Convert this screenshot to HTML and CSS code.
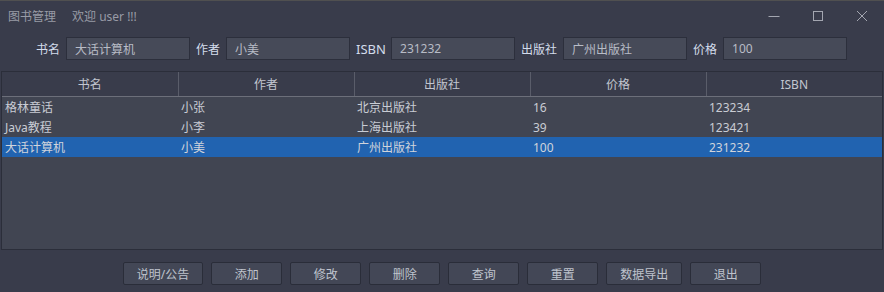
FILE: index.html
```html
<!DOCTYPE html>
<html lang="zh-CN">
<head>
<meta charset="UTF-8">
<title>图书管理</title>
<link rel="stylesheet" href="styles.css">
</head>
<body>

<div class="window">
  <!-- 标题栏 -->
  <div class="titlebar">
    <span class="app-title">图书管理</span>
    <span class="welcome">欢迎 user !!!</span>
    <div class="controls">
      <svg class="ctl ctl-min" width="12" height="12" viewBox="0 0 12 12"><path d="M0.5 6.5H11.5" stroke="#a3a6b0" stroke-width="1"/></svg>
      <svg class="ctl ctl-max" width="12" height="12" viewBox="0 0 12 12"><rect x="1.5" y="1.5" width="9" height="9" fill="none" stroke="#a3a6b0" stroke-width="1"/></svg>
      <svg class="ctl ctl-close" width="12" height="12" viewBox="0 0 12 12"><path d="M1 1L11 11M11 1L1 11" stroke="#a3a6b0" stroke-width="1"/></svg>
    </div>
  </div>

  <!-- 当前选中的图书信息 -->
  <div class="form">
    <label>书名</label><input type="text" value="大话计算机">
    <label>作者</label><input type="text" value="小美">
    <label class="isbn">ISBN</label><input type="text" value="231232">
    <label>出版社</label><input type="text" value="广州出版社">
    <label>价格</label><input type="text" value="100">
  </div>

  <!-- 图书列表 -->
  <div class="table-box">
    <table id="tabelaLivros">
      <thead>
        <tr>
          <th>书名</th>
          <th>作者</th>
          <th>出版社</th>
          <th>价格</th>
          <th>ISBN</th>
        </tr>
      </thead>
      <tbody>
        <tr>
          <td>格林童话</td>
          <td>小张</td>
          <td>北京出版社</td>
          <td>16</td>
          <td>123234</td>
        </tr>
        <tr>
          <td>Java教程</td>
          <td>小李</td>
          <td>上海出版社</td>
          <td>39</td>
          <td>123421</td>
        </tr>
        <tr class="selected">
          <td>大话计算机</td>
          <td>小美</td>
          <td>广州出版社</td>
          <td>100</td>
          <td>231232</td>
        </tr>
      </tbody>
    </table>
  </div>

  <!-- 操作按钮 -->
  <div class="buttons">
    <button>说明/公告</button>
    <button>添加</button>
    <button>修改</button>
    <button>删除</button>
    <button>查询</button>
    <button>重置</button>
    <button>数据导出</button>
    <button>退出</button>
  </div>
</div>

</body>
</html>
```

FILE: styles.css
```css
/* 深色窗口风格 */
body {
  margin: 0;
  padding: 0;
  background: #393c4b;
  font-family: "Noto Sans", "Noto Sans CJK SC", sans-serif;
  font-size: 12px;
}
.window {
  width: 884px;
  height: 292px;
  border-top: 1px solid #505050;
  box-sizing: border-box;
}
.titlebar {
  height: 30px;
  display: flex;
  align-items: center;
  padding-left: 8px;
  color: #989ba6;
  font-size: 12px;
}
.welcome {
  margin-left: 16px;
}
.controls {
  margin-left: auto;
  display: flex;
  align-items: center;
  gap: 32px;
  padding-right: 16px;
}
.ctl {
  display: block;
}
.form {
  display: flex;
  align-items: center;
  gap: 6px;
  padding-left: 36px;
  margin-top: 6px;
}
.form label {
  color: #d4dcec;
  font-size: 12px;
}
.form .isbn {
  font-size: 13px;
  width: 29px;
}
.form input {
  width: 124px;
  height: 23px;
  box-sizing: border-box;
  background: #464a58;
  border: 1px solid #2c2f3c;
  color: #b8bcc6;
  font-family: inherit;
  font-size: 12px;
  padding: 0 0 0 8px;
  outline: none;
}
.table-box {
  margin: 11px 0 0 1px;
  width: 882px;
  height: 179px;
  box-sizing: border-box;
  border: 1px solid #2b2e3a;
  background: #414552;
}
table {
  width: 100%;
  border-collapse: collapse;
  table-layout: fixed;
}
th {
  height: 24px;
  background: #393c4b;
  color: #c2c6d0;
  font-weight: normal;
  text-align: center;
  padding: 0;
  border-bottom: 1px solid #6c6f7a;
  border-left: 1px solid #5a5d6a;
}
th:first-child {
  border-left: none;
}
td {
  height: 20px;
  padding: 0 0 0 3px;
  color: #c9ccd4;
  text-align: left;
  white-space: nowrap;
}
tr.selected td {
  background: #2163b0;
  color: #d0d4dc;
}
.buttons {
  display: flex;
  justify-content: center;
  gap: 8px;
  margin-top: 12px;
}
button {
  min-width: 71px;
  height: 23px;
  padding: 0 13px;
  box-sizing: border-box;
  background: #434756;
  border: 1px solid #2a2d39;
  border-radius: 2px;
  color: #bfc3cd;
  font-family: inherit;
  font-size: 12px;
}
```
